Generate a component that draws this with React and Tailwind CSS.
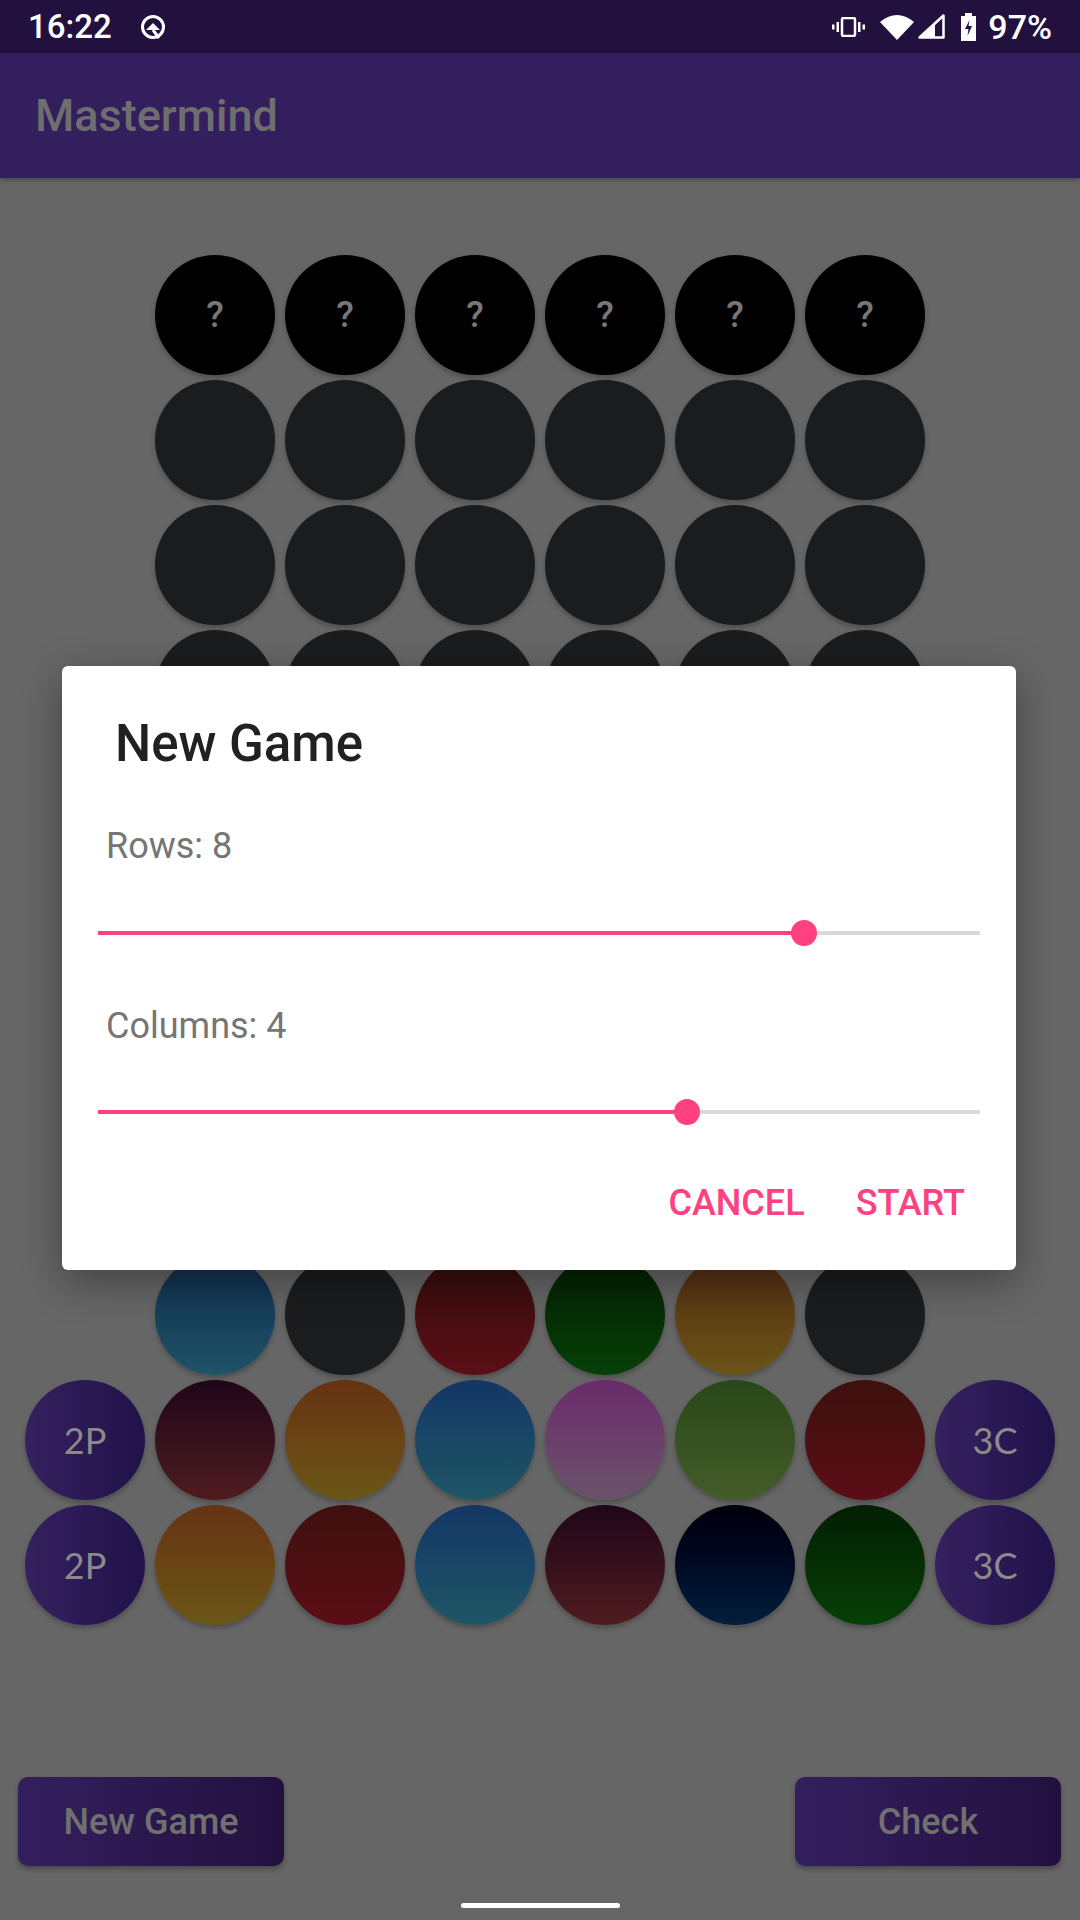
import React from 'react';

// peg colours, already dimmed by the dialog scrim
const PEG = {
  black: 'bg-black',
  empty: 'bg-[#1b1c1e]',
  blue: 'bg-linear-to-b from-[#102d4f] to-[#1f5366]',
  red: 'bg-linear-to-b from-[#330d0c] to-[#5b0e16]',
  green: 'bg-linear-to-b from-[#031f03] to-[#073f07]',
  orange: 'bg-linear-to-b from-[#522b12] to-[#6a5417]',
  maroon: 'bg-linear-to-b from-[#200619] to-[#4f1c1f]',
  amber: 'bg-linear-to-b from-[#663213] to-[#6a5616]',
  sky: 'bg-linear-to-b from-[#143664] to-[#1f5666]',
  pink: 'bg-linear-to-b from-[#6a2a6a] to-[#6a526a]',
  olive: 'bg-linear-to-b from-[#284817] to-[#445c29]',
  crimson: 'bg-linear-to-b from-[#3d100e] to-[#5c0d16]',
  navy: 'bg-linear-to-b from-[#00000c] to-[#001f3e]',
  forest: 'bg-linear-to-b from-[#031f03] to-[#064006]',
  player: 'bg-linear-to-r from-[#36205f] to-[#20124a]',
};

const board = [
  ['empty', 'empty', 'empty', 'empty', 'empty', 'empty'],
  ['empty', 'empty', 'empty', 'empty', 'empty', 'empty'],
  ['empty', 'empty', 'empty', 'empty', 'empty', 'empty'],
  ['empty', 'empty', 'empty', 'empty', 'empty', 'empty'],
  ['empty', 'empty', 'empty', 'empty', 'empty', 'empty'],
  ['empty', 'empty', 'empty', 'empty', 'empty', 'empty'],
  ['empty', 'empty', 'empty', 'empty', 'empty', 'empty'],
  ['blue', 'empty', 'red', 'green', 'orange', 'empty'],
];

const palette = [
  ['maroon', 'amber', 'sky', 'pink', 'olive', 'crimson'],
  ['amber', 'crimson', 'sky', 'maroon', 'navy', 'forest'],
];

function Peg({ color, children }) {
  return (
    <div
      className={`w-[120px] h-[120px] rounded-full shrink-0 flex items-center justify-center shadow-[0_3px_5px_rgba(0,0,0,0.25)] ${PEG[color]}`}
    >
      {children}
    </div>
  );
}

function Slider({ fill }) {
  return (
    <div className="relative h-[52px] mx-[36px] flex items-center">
      <div className="h-[4px] w-full bg-[#d9d9d9]" />
      <div className={`absolute left-0 top-[24px] h-[4px] bg-[#ff4081] ${fill}`} />
      <div className={`absolute top-[13px] w-[26px] h-[26px] -ml-[13px] rounded-full bg-[#ff4081] ${fill === 'w-[80%]' ? 'left-[80%]' : 'left-[66.8%]'}`} />
    </div>
  );
}

function StatusBar() {
  return (
    <div className="h-[53px] bg-[#22113f] flex items-center px-[28px] text-white font-['Roboto',sans-serif]">
      <span className="text-[33px] leading-none font-medium">16:22</span>
      <svg className="ml-[26px]" width="30" height="26" viewBox="0 0 30 26">
        <circle cx="15" cy="13" r="10.5" fill="none" stroke="white" strokeWidth="3" />
        <path d="M8 16 L15 9 L22 16 Z" fill="white" />
        <path d="M15 16 L21 24" stroke="white" strokeWidth="3" />
      </svg>
      <div className="ml-auto flex items-center">
        <svg width="33" height="20" viewBox="0 0 33 20">
          <rect x="10" y="1" width="13" height="18" rx="1.5" fill="none" stroke="white" strokeWidth="2.5" />
          <rect x="4.5" y="5" width="2.5" height="10" fill="white" />
          <rect x="0" y="7.5" width="2.5" height="5" fill="white" />
          <rect x="26" y="5" width="2.5" height="10" fill="white" />
          <rect x="30.5" y="7.5" width="2.5" height="5" fill="white" />
        </svg>
        <svg className="ml-[15px]" width="34" height="26" viewBox="0 0 34 26">
          <path d="M17 26 L0 8 Q17 -6 34 8 Z" fill="white" />
        </svg>
        <svg className="ml-[4px]" width="27" height="25" viewBox="0 0 27 25">
          <path d="M25.5 1.5 L25.5 23.5 L1.5 23.5 Z" fill="none" stroke="white" strokeWidth="2.5" strokeLinejoin="round" />
          <path d="M17 9 L17 24 L1 24 Z" fill="white" />
        </svg>
        <svg className="ml-[15px]" width="17" height="28" viewBox="0 0 17 28">
          <rect x="5" y="0" width="7" height="3" fill="white" />
          <path d="M1 3 H16 V28 H1 Z M9.5 7 L5 16 H8.5 L7.5 23 L12 13 H8.5 Z" fill="white" fillRule="evenodd" />
        </svg>
        <span className="ml-[11px] text-[34px] leading-none font-medium">97%</span>
      </div>
    </div>
  );
}

export default function App() {
  return (
    <div className="relative w-[1080px] h-[1920px] overflow-hidden bg-[#666666] flex flex-col font-['Roboto',sans-serif]">
      <StatusBar />
      <div className="h-[125px] bg-[#341f5e] flex items-center px-[35px] shadow-[0_2px_4px_rgba(0,0,0,0.3)]">
        <span className="text-[45px] font-medium text-[#6e6e6e] leading-none">Mastermind</span>
      </div>

      <main className="flex flex-col items-center gap-[5px] pt-[77px]">
        <div className="flex gap-[10px]">
          {[0, 1, 2, 3, 4, 5].map((i) => (
            <Peg key={i} color="black">
              <span className="text-[36px] leading-none text-[#777777] font-medium">?</span>
            </Peg>
          ))}
        </div>
        {board.map((row, r) => (
          <div key={r} className="flex gap-[10px]">
            {row.map((c, i) => (
              <Peg key={i} color={c} />
            ))}
          </div>
        ))}
        {palette.map((row, r) => (
          <div key={r} className="flex gap-[10px]">
            <Peg color="player">
              <span className="text-[36px] leading-none text-[#8a8a8a] font-['Lato',sans-serif]">2P</span>
            </Peg>
            {row.map((c, i) => (
              <Peg key={i} color={c} />
            ))}
            <Peg color="player">
              <span className="text-[36px] leading-none text-[#8a8a8a] font-['Lato',sans-serif]">3C</span>
            </Peg>
          </div>
        ))}
      </main>

      <div className="mt-[152px] flex justify-between pl-[18px] pr-[19px]">
        <button className="w-[266px] h-[89px] rounded-[10px] bg-linear-to-r from-[#341f5e] to-[#22113f] text-[36px] font-medium text-[#707070] shadow-[0_3px_5px_rgba(0,0,0,0.3)]">
          New Game
        </button>
        <button className="w-[266px] h-[89px] rounded-[10px] bg-linear-to-r from-[#341f5e] to-[#22113f] text-[36px] font-medium text-[#707070] shadow-[0_3px_5px_rgba(0,0,0,0.3)]">
          Check
        </button>
      </div>
      <div className="mt-[37px] mx-auto w-[159px] h-[5px] rounded-full bg-white" />

      <div className="absolute left-[62px] top-[666px] w-[954px] h-[604px] bg-white rounded-[6px] shadow-[0_12px_40px_rgba(0,0,0,0.35)] flex flex-col">
        <h2 className="mt-[52px] ml-[53px] text-[51px] leading-none font-medium text-[#212121]">New Game</h2>
        <div className="mt-[59px] ml-[44px] text-[36px] leading-none text-[#757575]">Rows: 8</div>
        <div className="mt-[43px]">
          <Slider fill="w-[80%]" />
        </div>
        <div className="mt-[49px] ml-[44px] text-[36px] leading-none text-[#757575]">Columns: 4</div>
        <div className="mt-[42px]">
          <Slider fill="w-[66.8%]" />
        </div>
        <div className="mt-[47px] flex justify-end gap-[51px] pr-[51px] text-[36px] leading-none font-medium text-[#ff4081]">
          <span>CANCEL</span>
          <span>START</span>
        </div>
      </div>
    </div>
  );
}
